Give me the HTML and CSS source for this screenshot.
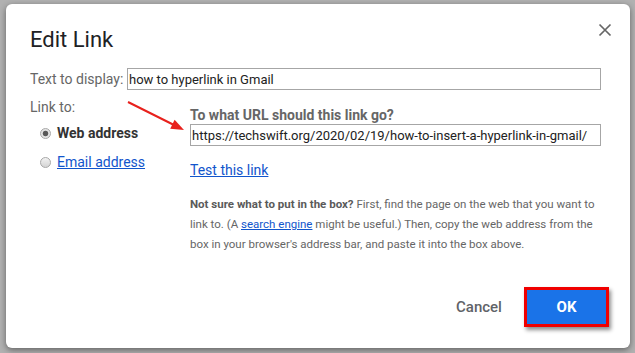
FILE: index.html
```html
<!DOCTYPE html>
<html lang="en">
<head>
<meta charset="utf-8">
<title>Edit Link</title>
<link rel="stylesheet" href="styles.css">
</head>
<body>
<div class="dialog">
  <div class="head">
    <h1 class="title">Edit Link</h1>
    <button class="close" aria-label="Close">
      <svg width="14" height="14" viewBox="0 0 14 14"><path d="M1.5 1.5L12.5 12.5M12.5 1.5L1.5 12.5" stroke="#666" stroke-width="1.7" fill="none"/></svg>
    </button>
  </div>
  <div class="display-row">
    <label class="lbl">Text to display:</label>
    <input class="field" type="text" value="how to hyperlink in Gmail">
  </div>
  <div class="linkto">
    <div class="left">
      <div class="lbl">Link to:</div>
      <div class="radio"><span class="dot checked"></span><span class="rtext">Web address</span></div>
      <div class="radio second"><span class="dot"></span><a class="link" href="#">Email address</a></div>
    </div>
    <div class="right">
      <div class="qlabel">To what URL should this link go?</div>
      <input class="field url" type="text" value="https://techswift.org/2020/02/19/how-to-insert-a-hyperlink-in-gmail/">
      <a class="link test" href="#">Test this link</a>
      <p class="help"><b>Not sure what to put in the box?</b> First, find the page on the web that you want to link to. (A <a class="link" href="#">search engine</a> might be useful.) Then, copy the web address from the box in your browser's address bar, and paste it into the box above.</p>
    </div>
  </div>
  <div class="footer">
    <button class="cancel">Cancel</button>
    <button class="ok">OK</button>
  </div>
  <svg class="arrow" width="66" height="36" viewBox="0 0 66 36">
    <path d="M4 4L50 27" stroke="#e8201c" stroke-width="2" fill="none"/>
    <polygon points="60,32 46.2,30.7 50.6,21.7" fill="#e8201c"/>
  </svg>
</div>
</body>
</html>
```
FILE: styles.css
```css
html, body {
  margin: 0;
}
body {
  background: #b1b1b1;
  padding: 4px 0 0 6px;
  height: 353px;
  box-sizing: border-box;
  overflow: hidden;
  font-family: Roboto, "Liberation Sans", Arial, sans-serif;
}
.dialog {
  position: relative;
  width: 624px;
  height: 344px;
  box-sizing: border-box;
  background: #fff;
  border-radius: 6px;
  box-shadow: 0 2px 6px rgba(0, 0, 0, 0.45);
  padding: 22px 29px 21px 24px;
  display: flex;
  flex-direction: column;
}
.head {
  display: flex;
  justify-content: space-between;
  align-items: flex-start;
  height: 28px;
  margin-bottom: 14px;
}
.title {
  margin: 0;
  font-size: 22px;
  line-height: 28px;
  font-weight: 400;
  color: #202124;
}
.close {
  margin: -3px -11px 0 0;
  width: 14px;
  height: 14px;
  padding: 0;
  border: 0;
  background: none;
  display: block;
}
.close svg {
  display: block;
}
.display-row {
  display: flex;
  align-items: center;
  height: 22px;
}
.lbl {
  flex: none;
  width: 97px;
  font-size: 14px;
  line-height: 20px;
  color: #666;
}
.field {
  width: 474px;
  height: 22px;
  box-sizing: border-box;
  border: 1px solid #a6a6a6;
  border-radius: 0;
  padding: 0 1px;
  margin: 0;
  font-family: Roboto, "Liberation Sans", Arial, sans-serif;
  font-size: 13px;
  color: #222;
  outline: none;
  background: #fff;
}
.linkto {
  display: flex;
  margin-top: 7px;
}
.left {
  flex: none;
  width: 160px;
}
.radio {
  display: flex;
  align-items: center;
  height: 20px;
  margin-top: 6px;
  padding-left: 10px;
  font-size: 14px;
}
.radio.second {
  margin-top: 9px;
}
.dot {
  flex: none;
  width: 11px;
  height: 11px;
  box-sizing: border-box;
  border-radius: 50%;
  border: 1px solid #a8a8a8;
  background: linear-gradient(#f2f2f2, #d4d4d4);
  margin-right: 6px;
}
.dot.checked {
  background: radial-gradient(circle at center, #555 0, #5a5a5a 2.4px, #e4e4e4 3.2px);
}
.rtext {
  font-weight: 700;
  color: #333;
}
.link {
  color: #1155cc;
  text-decoration: underline;
}
.right {
  width: 411px;
  padding-top: 9px;
}
.qlabel {
  font-size: 14px;
  font-weight: 700;
  line-height: 18px;
  color: #666;
}
.url {
  display: block;
  width: 411px;
}
.test {
  display: inline-block;
  margin-top: 14px;
  font-size: 14px;
  line-height: 20px;
}
.help {
  margin: 14px 0 0;
  font-size: 11.5px;
  line-height: 20px;
  color: #666;
}
.help b {
  color: #5a5a5a;
}
.footer {
  margin-top: auto;
  margin-right: -8px;
  display: flex;
  justify-content: flex-end;
  gap: 5px;
}
.cancel {
  width: 80px;
  height: 40px;
  padding: 0;
  border: 0;
  background: none;
  font-family: Roboto, "Liberation Sans", Arial, sans-serif;
  font-size: 15px;
  font-weight: 500;
  color: #5f6368;
}
.ok {
  width: 85px;
  height: 40px;
  box-sizing: border-box;
  padding: 0;
  border: 3px solid #f00000;
  background: #1a73e8;
  color: #fff;
  font-family: Roboto, "Liberation Sans", Arial, sans-serif;
  font-size: 15px;
  font-weight: 700;
  box-shadow: 2px 3px 4px rgba(0, 0, 0, 0.45);
}
.arrow {
  position: absolute;
  left: 118px;
  top: 94px;
}
```
